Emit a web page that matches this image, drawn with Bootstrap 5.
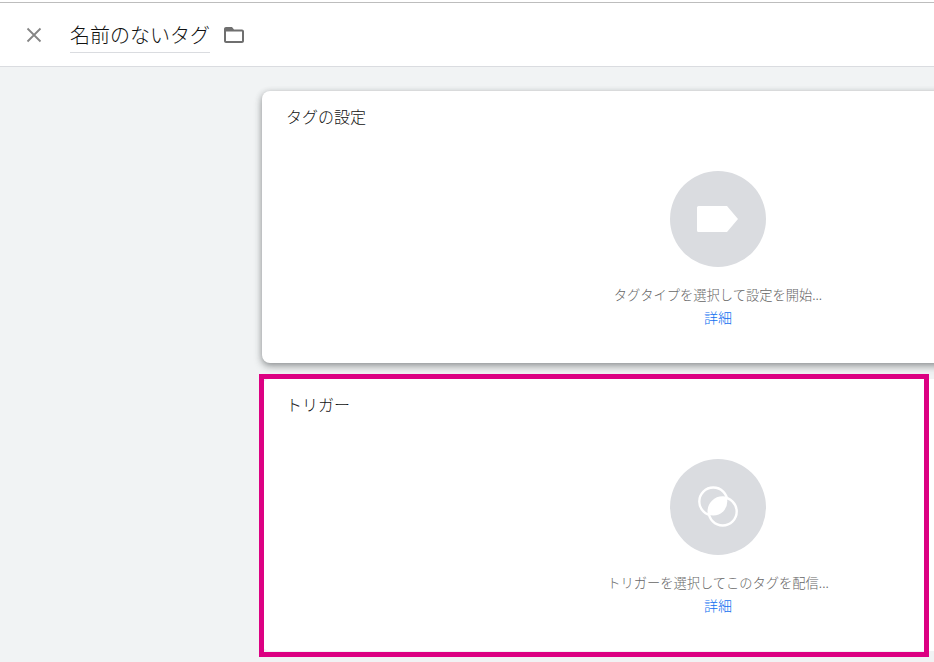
<!DOCTYPE html>
<html lang="ja">
<head>
<meta charset="utf-8">
<title>名前のないタグ</title>
<link href="https://cdn.jsdelivr.net/npm/bootstrap@5.3.0/dist/css/bootstrap.min.css" rel="stylesheet">
<style>
html, body { height: 662px; overflow: hidden; }
body { background: #f1f3f4; font-family: "Noto Sans CJK JP", "Liberation Sans", sans-serif; color: #111; }
.topline { height: 3px; background: #fff; box-shadow: inset 0 -1px 0 #bdbdbd; }
.editor-head { height: 64px; background: #fff; border-bottom: 1px solid #dadce0; padding-left: 24px; }
.close-ic { width: 20px; height: 20px; color: #858585; }
.tag-name { width: 140px; margin-left: 26px; height: 38px; margin-top: 12px; padding-top: 2px; font-size: 20px; line-height: 36px; font-weight: 300; color: #111; border-bottom: 1px solid #dadce0; white-space: nowrap; }
.folder-ic { width: 24px; height: 24px; margin-left: 12px; color: #6f6f6f; }
.stack { width: 912px; margin-left: 262px; padding-top: 24px; }
.sheet { height: 272px; background: #fff; border-radius: 8px; padding: 13px 24px 0; }
.sheet-lift { box-shadow: 0 2px 6px rgba(60,64,67,.45), 0 4px 10px rgba(60,64,67,.2); margin-bottom: 16px; }
.sheet-title { font-size: 16px; line-height: 24px; font-weight: 300; margin: 0; }
.sheet-body { padding-top: 43px; }
.disc { width: 96px; height: 96px; border-radius: 50%; background: #dadce0; }
.hint { font-size: 13.25px; line-height: 20px; font-weight: 300; color: #666; margin-top: 18px; white-space: nowrap; }
.more { font-size: 14px; line-height: 20px; margin-top: 2px; color: #0f6ff0; text-decoration: none; font-weight: 300; }
.frame-wrap { position: relative; }
.pink-frame { position: absolute; left: -3px; top: -5px; width: 670px; height: 283px; border: 5px solid #dc0082; pointer-events: none; }
</style>
</head>
<body>
<div class="topline"></div>
<header class="editor-head d-flex align-items-start">
  <svg class="close-ic align-self-center" viewBox="0 0 20 20" aria-label="閉じる"><path d="M3.5 3.5 16.5 16.5M16.5 3.5 3.5 16.5" stroke="currentColor" stroke-width="1.8" fill="none"/></svg>
  <div class="tag-name">名前のないタグ</div>
  <svg class="folder-ic align-self-center" viewBox="0 0 24 24" aria-label="フォルダ"><path d="M10 4H4C2.900 4 2 4.900 2 6V18C2 19.100 2.900 20 4 20H20C21.100 20 22 19.100 22 18V8.500C22 7.400 21.100 6.500 20 6.500H12L10 4ZM4 8.500H20V18H4V8.500Z" fill="currentColor"/></svg>
</header>
<main class="stack">
  <section class="sheet sheet-lift">
    <h2 class="sheet-title">タグの設定</h2>
    <div class="sheet-body d-flex flex-column align-items-center">
      <div class="disc d-flex align-items-center justify-content-center">
        <svg width="42" height="26" viewBox="0 0 42 26"><path d="M1.500 0H30L41 13 30 26H1.500A1.500 1.500 0 0 1 0 24.500V1.500A1.500 1.500 0 0 1 1.500 0Z" fill="#fff"/></svg>
      </div>
      <div class="hint">タグタイプを選択して設定を開始...</div>
      <a class="more" href="#">詳細</a>
    </div>
  </section>
  <div class="frame-wrap">
    <section class="sheet">
      <h2 class="sheet-title">トリガー</h2>
      <div class="sheet-body d-flex flex-column align-items-center">
        <div class="disc d-flex align-items-center justify-content-center">
          <svg width="42" height="42" viewBox="0 0 42 42">
            <defs><clipPath id="lap"><circle cx="16.300" cy="15.500" r="14"/></clipPath></defs>
            <circle cx="16.300" cy="15.500" r="14" fill="none" stroke="#fff" stroke-width="2.400"/>
            <circle cx="25.700" cy="25.500" r="14" fill="#dadce0" stroke="#fff" stroke-width="2.400"/>
            <circle cx="25.700" cy="25.500" r="14" fill="#fff" clip-path="url(#lap)"/>
          </svg>
        </div>
        <div class="hint">トリガーを選択してこのタグを配信...</div>
        <a class="more" href="#">詳細</a>
      </div>
    </section>
    <div class="pink-frame"></div>
  </div>
</main>
</body>
</html>
